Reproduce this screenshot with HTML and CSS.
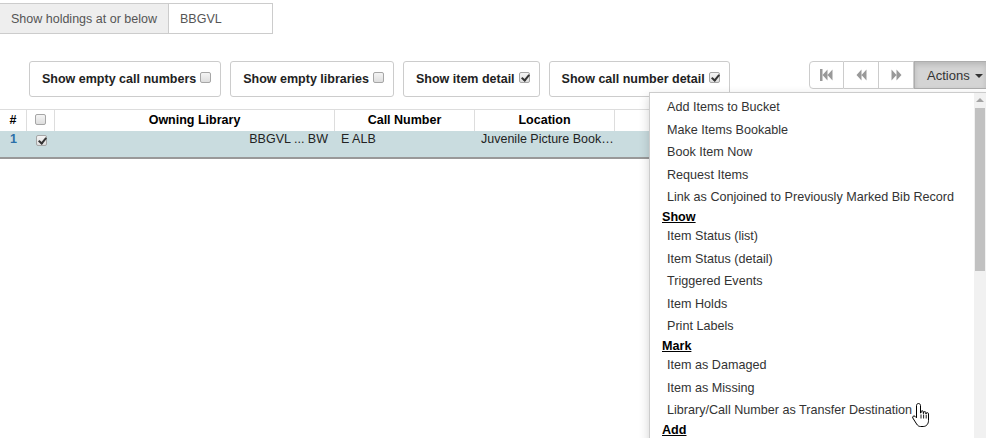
FILE: index.html
```html
<!DOCTYPE html>
<html>
<head>
<meta charset="utf-8">
<link rel="stylesheet" href="styles.css">
</head>
<body>
<div class="page">
  <div class="holdings">
    <span class="holdings-label">Show holdings at or below</span>
    <span class="holdings-input">BBGVL</span>
  </div>

  <div class="toolbar">
    <div class="filter">Show empty call numbers <span class="cb"></span></div>
    <div class="filter">Show empty libraries <span class="cb"></span></div>
    <div class="filter">Show item detail <span class="cb checked"></span></div>
    <div class="filter">Show call number detail <span class="cb checked"></span></div>
    <div class="pager">
      <span class="pbtn"><svg width="13" height="12" viewBox="0 0 13 12"><rect x="0" y="0" width="2.5" height="12" fill="#999"/><path d="M2.5 6 L7.5 0.5 V11.5 Z M7.5 6 L12.5 0.5 V11.5 Z" fill="#999"/></svg></span>
      <span class="pbtn"><svg width="11" height="12" viewBox="0 0 11 12"><path d="M0.5 6 L5.5 0.5 V11.5 Z M5.5 6 L10.5 0.5 V11.5 Z" fill="#999"/></svg></span>
      <span class="pbtn"><svg width="11" height="12" viewBox="0 0 11 12"><path d="M10.5 6 L5.5 0.5 V11.5 Z M5.5 6 L0.5 0.5 V11.5 Z" fill="#999"/></svg></span>
      <span class="actions">Actions <span class="caret"></span></span>
    </div>
  </div>

  <div class="grid">
    <div class="grid-head">
      <div class="c c-num">#</div>
      <div class="c c-cb"><span class="cb"></span></div>
      <div class="c c-lib">Owning Library</div>
      <div class="c c-call">Call Number</div>
      <div class="c c-loc">Location</div>
      <div class="c c-item">Item</div>
    </div>
    <div class="grid-row">
      <div class="c c-num num">1</div>
      <div class="c c-cb"><span class="cb checked"></span></div>
      <div class="c c-lib lib">BBGVL ... BW</div>
      <div class="c c-call">E ALB</div>
      <div class="c c-loc">Juvenile Picture Book…</div>
      <div class="c c-item"></div>
    </div>
  </div>
</div>

<div class="menu">
  <ul class="menu-list">
    <li class="mi">Add Items to Bucket</li>
    <li class="mi">Make Items Bookable</li>
    <li class="mi">Book Item Now</li>
    <li class="mi">Request Items</li>
    <li class="mi">Link as Conjoined to Previously Marked Bib Record</li>
    <li class="mh">Show</li>
    <li class="mi">Item Status (list)</li>
    <li class="mi">Item Status (detail)</li>
    <li class="mi">Triggered Events</li>
    <li class="mi">Item Holds</li>
    <li class="mi">Print Labels</li>
    <li class="mh">Mark</li>
    <li class="mi">Item as Damaged</li>
    <li class="mi">Item as Missing</li>
    <li class="mi">Library/Call Number as Transfer Destination</li>
    <li class="mh">Add</li>
  </ul>
  <div class="scrollbar">
    <span class="sb-arrow"></span>
    <span class="sb-thumb"></span>
  </div>
</div>

<svg class="cursor" width="22" height="28" viewBox="0 0 22 28">
  <path d="M7.5 1.5 C8.6 1.5 9.5 2.4 9.5 3.5 V11 H10 V9.8 C10 8.4 12.3 8.4 12.3 9.8 V11.5 H12.6 V10.6 C12.6 9.3 14.9 9.3 14.9 10.6 V12 H15.2 V11.6 C15.2 10.4 17.5 10.4 17.5 11.6 V18.5 C17.5 21.8 15.5 24.5 12.2 24.5 H9.6 C7.7 24.5 6.6 23.5 5.6 22 L1.8 16 C1 14.7 2.8 13.2 4 14.3 L5.5 15.8 V3.5 C5.5 2.4 6.4 1.5 7.5 1.5 Z" fill="#fff" stroke="#000" stroke-width="1"/>
  <path d="M10 12.5 V16.5 M12.6 12.5 V16.5 M15.2 12.8 V16.5" stroke="#000" stroke-width="0.9" fill="none"/>
</svg>
</body>
</html>
```

FILE: styles.css
```css
* { box-sizing: border-box; }
html, body {
  margin: 0;
  padding: 0;
  width: 986px;
  height: 438px;
  overflow: hidden;
  background: #fff;
}
body {
  font-family: "Liberation Sans", Arial, sans-serif;
  font-size: 12.5px;
  color: #333;
  position: relative;
}
.page {
  padding-top: 3px;
}
.holdings {
  display: flex;
  height: 31px;
}
.holdings-label {
  display: flex;
  align-items: center;
  width: 169px;
  padding-left: 11px;
  background: #eee;
  border: 1px solid #ccc;
  border-left: none;
  color: #555;
}
.holdings-input {
  display: flex;
  align-items: center;
  width: 104px;
  padding-left: 11px;
  border: 1px solid #ccc;
  border-left: none;
  color: #555;
}
.toolbar {
  display: flex;
  align-items: flex-start;
  margin-top: 27px;
  padding-left: 29px;
  gap: 9px;
}
.filter {
  display: flex;
  align-items: center;
  height: 36px;
  padding: 0 9px 0 12px;
  border: 1px solid #ccc;
  border-radius: 3px;
  font-weight: bold;
  color: #222;
  white-space: nowrap;
}
.filter .cb { margin-left: 4px; margin-top: -3px; }
.cb {
  display: inline-block;
  position: relative;
  width: 11px;
  height: 11px;
  border: 1px solid #a6a6a6;
  border-radius: 2px;
  background: linear-gradient(#f4f4f4, #dedede);
  vertical-align: middle;
}
.cb.checked::after {
  content: "";
  position: absolute;
  left: 3px;
  top: 0px;
  width: 3px;
  height: 6px;
  border: solid #333;
  border-width: 0 2px 2px 0;
  transform: rotate(40deg);
}
.pager {
  margin-left: auto;
  display: flex;
  height: 28px;
}
.pbtn {
  display: flex;
  align-items: center;
  justify-content: center;
  width: 35px;
  border: 1px solid #ccc;
  border-left: none;
  background: #fff;
}
.pbtn:first-child {
  border-left: 1px solid #ccc;
  border-radius: 4px 0 0 4px;
}
.actions {
  display: flex;
  align-items: center;
  width: 72px;
  padding-left: 12px;
  font-size: 13px;
  background: #d4d4d4;
  border: 1px solid #adadad;
  border-right: none;
  color: #333;
  box-shadow: inset 0 3px 5px rgba(0,0,0,.125);
}
.caret {
  display: inline-block;
  margin-left: 5px;
  margin-top: 1px;
  border-top: 4px solid #333;
  border-left: 4px solid transparent;
  border-right: 4px solid transparent;
}
.grid {
  margin-top: 12px;
  width: 986px;
}
.grid-head {
  display: flex;
  height: 22px;
  border-top: 1px solid #ddd;
  font-weight: bold;
  font-size: 12.5px;
  color: #000;
}
.grid-head .c {
  border-right: 1px solid #ddd;
  text-align: center;
  line-height: 21px;
}
.grid-head .c-cb { border-right: 1px solid #ddd; }
.grid-head .c-num { border-right: 1px solid #ddd; }
.grid-head .c-cb .cb { margin-top: -3px; }
.grid-row {
  display: flex;
  height: 28px;
  background: #c9dcdf;
  border-bottom: 2px solid #999;
  color: #222;
}
.grid-row .c {
  padding-top: 0;
  line-height: 16px;
}
.c { flex: none; overflow: hidden; white-space: nowrap; text-overflow: ellipsis; }
.c-num { width: 27px; text-align: center; }
.c-cb { width: 28px; text-align: center; }
.c-lib { width: 280px; }
.c-call { width: 140px; padding-left: 6px; }
.c-loc { width: 140px; padding-left: 6px; }
.c-item { width: 140px; }
.grid-head .c-call, .grid-head .c-loc { padding-left: 0; }
.num { color: #2a6fa8; font-weight: bold; text-align: left; padding-left: 10px; }
.grid-row .c-cb .cb { margin-top: 2px; }
.lib { text-align: right; padding-right: 7px; }
.menu {
  position: absolute;
  left: 649px;
  top: 92px;
  width: 337px;
  height: 360px;
  display: flex;
  background: #fff;
  border: 1px solid #ccc;
  border-right: none;
  box-shadow: 0 4px 10px rgba(0,0,0,.18);
}
.menu-list {
  list-style: none;
  margin: 0;
  padding: 3px 0 0 0;
  flex: 1;
  font-size: 12.6px;
}
.mi {
  padding-left: 17px;
  line-height: 22.5px;
  height: 22.5px;
  color: #333;
  white-space: nowrap;
}
.mh {
  padding-left: 12px;
  height: 16.5px;
  line-height: 16px;
  font-weight: bold;
  text-decoration: underline;
  color: #000;
}
.scrollbar {
  width: 12px;
  background: #f1f1f1;
  display: flex;
  flex-direction: column;
  align-items: center;
}
.sb-arrow {
  margin-top: 5px;
  border-bottom: 4px solid #a3a3a3;
  border-left: 4px solid transparent;
  border-right: 4px solid transparent;
}
.sb-thumb {
  margin-top: 6px;
  width: 10px;
  height: 163px;
  background: #c1c1c1;
}
.cursor {
  position: absolute;
  left: 911px;
  top: 402px;
}
```
